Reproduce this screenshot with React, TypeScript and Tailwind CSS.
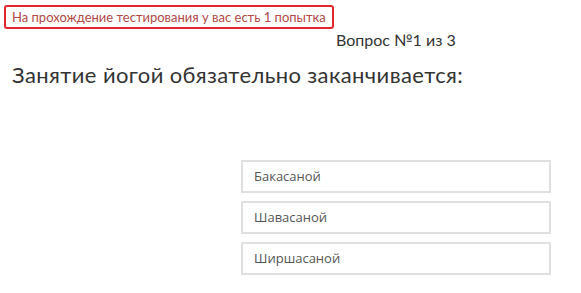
export default function App() {
  const options = ["Бакасаной", "Шавасаной", "Ширшасаной"];

  return (
    <div className="w-[581px] h-[293px] bg-white overflow-hidden font-['Lato','Open_Sans',sans-serif]">
      <div className="pt-[4px] pl-[4px]">
        <div className="inline-block border-2 border-[#e3262b] rounded-[3px] px-[6px] h-[24px] leading-[20px] text-[13px] text-[#b04848]">
          На прохождение тестирования у вас есть 1 попытка
        </div>
      </div>
      <div className="pl-[336px] mt-[1px] text-[16px] leading-[20px] text-[#333]">
        Вопрос №1 из 3
      </div>
      <h1 className="pl-[12px] mt-[11px] text-[22px] leading-[28px] tracking-[0.4px] text-[#333]">
        Занятие йогой обязательно заканчивается:
      </h1>
      <div className="ml-[241px] mt-[71px] w-[310px] flex flex-col gap-[8px]">
        {options.map((o) => (
          <div
            key={o}
            className="h-[33px] border-2 border-[#e0e0e0] px-[11px] flex items-center text-[13px] text-[#555] font-['Open_Sans',sans-serif]"
          >
            {o}
          </div>
        ))}
      </div>
    </div>
  );
}
